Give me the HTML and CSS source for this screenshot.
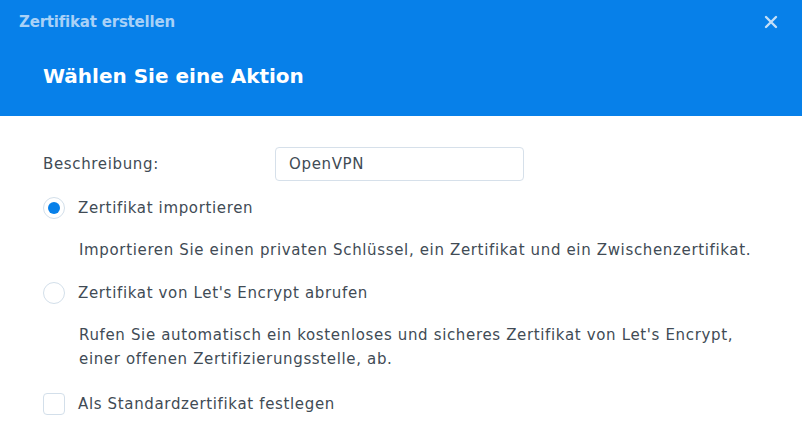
FILE: index.html
```html
<!DOCTYPE html>
<html lang="de">
<head>
  <meta charset="UTF-8" />
  <meta name="viewport" content="width=device-width, initial-scale=1" />
  <title>Zertifikat erstellen</title>
  <link rel="stylesheet" href="styles.css">
</head>
<body>

  <div class="dialog">
    <header class="dialog-head">
      <div class="head-bar">
        <span class="head-title">Zertifikat erstellen</span>
        <button class="close-btn" aria-label="Schließen">
          <svg width="14" height="14" viewBox="0 0 14 14">
            <path d="M2 2 L12 12 M12 2 L2 12" stroke="#c3def8" stroke-width="2.4" stroke-linecap="round" />
          </svg>
        </button>
      </div>
      <h1 class="step-title">Wählen Sie eine Aktion</h1>
    </header>

    <main class="dialog-body">
      <div class="form-row">
        <label class="field-label" for="desc">Beschreibung:</label>
        <input id="desc" class="text-input" type="text" value="OpenVPN" />
      </div>

      <div class="option first">
        <label class="check-row">
          <span class="radio checked"></span>
          <span>Zertifikat importieren</span>
        </label>
        <p class="option-desc">Importieren Sie einen privaten Schlüssel, ein Zertifikat und ein Zwischenzertifikat.</p>
      </div>

      <div class="option">
        <label class="check-row">
          <span class="radio"></span>
          <span>Zertifikat von Let's Encrypt abrufen</span>
        </label>
        <p class="option-desc">Rufen Sie automatisch ein kostenloses und sicheres Zertifikat von Let's Encrypt,<br>einer offenen Zertifizierungsstelle, ab.</p>
      </div>

      <label class="check-row default-row">
        <span class="checkbox"></span>
        <span>Als Standardzertifikat festlegen</span>
      </label>
    </main>
  </div>

</body>
</html>
```

FILE: styles.css
```css
body {
  margin: 0;
  font-family: "DejaVu Sans", Verdana, sans-serif;
  font-size: 15px;
  letter-spacing: 0.65px;
  color: #414b55;
  background-color: #fff;
}

.dialog {
  width: 802px;
  height: 430px;
  overflow: hidden;
}

.dialog-head {
  background-color: #0780e9;
  height: 116px;
  box-sizing: border-box;
  padding: 12px 0 0 19px;
  letter-spacing: 0;
}

.head-bar {
  display: flex;
  align-items: center;
  justify-content: space-between;
  height: 20px;
}

.head-title {
  font-weight: bold;
  font-size: 15px;
  letter-spacing: -0.2px;
  color: #a9d1f7;
}

.close-btn {
  background: none;
  border: none;
  padding: 0;
  margin-right: 24px;
  width: 14px;
  height: 14px;
  display: flex;
}

.step-title {
  margin: 32px 0 0 24px;
  font-size: 20px;
  font-weight: bold;
  color: #fff;
}

.dialog-body {
  padding: 31px 0 0 43px;
}

.form-row {
  display: flex;
  align-items: center;
  height: 34px;
}

.field-label {
  width: 232px;
}

.text-input {
  width: 249px;
  height: 34px;
  box-sizing: border-box;
  border: 1px solid #d6e0ea;
  border-radius: 4px;
  padding: 0 13px;
  font: inherit;
  letter-spacing: inherit;
  color: #414b55;
}

.check-row {
  display: flex;
  align-items: center;
  gap: 13px;
  height: 32px;
}

.option {
  margin-top: 15px;
}

.option.first {
  margin-top: 11px;
}

.option-desc {
  margin: 14px 0 0 36px;
  line-height: 24px;
}

.radio {
  width: 22px;
  height: 22px;
  box-sizing: border-box;
  border: 1px solid #d3dfea;
  border-radius: 50%;
  display: flex;
  align-items: center;
  justify-content: center;
  flex-shrink: 0;
}

.radio.checked::after {
  content: "";
  width: 12px;
  height: 12px;
  border-radius: 50%;
  background-color: #0780e9;
}

.checkbox {
  width: 22px;
  height: 22px;
  box-sizing: border-box;
  border: 1px solid #d3dfea;
  border-radius: 4px;
  flex-shrink: 0;
}

.default-row {
  margin-top: 17px;
}
```
